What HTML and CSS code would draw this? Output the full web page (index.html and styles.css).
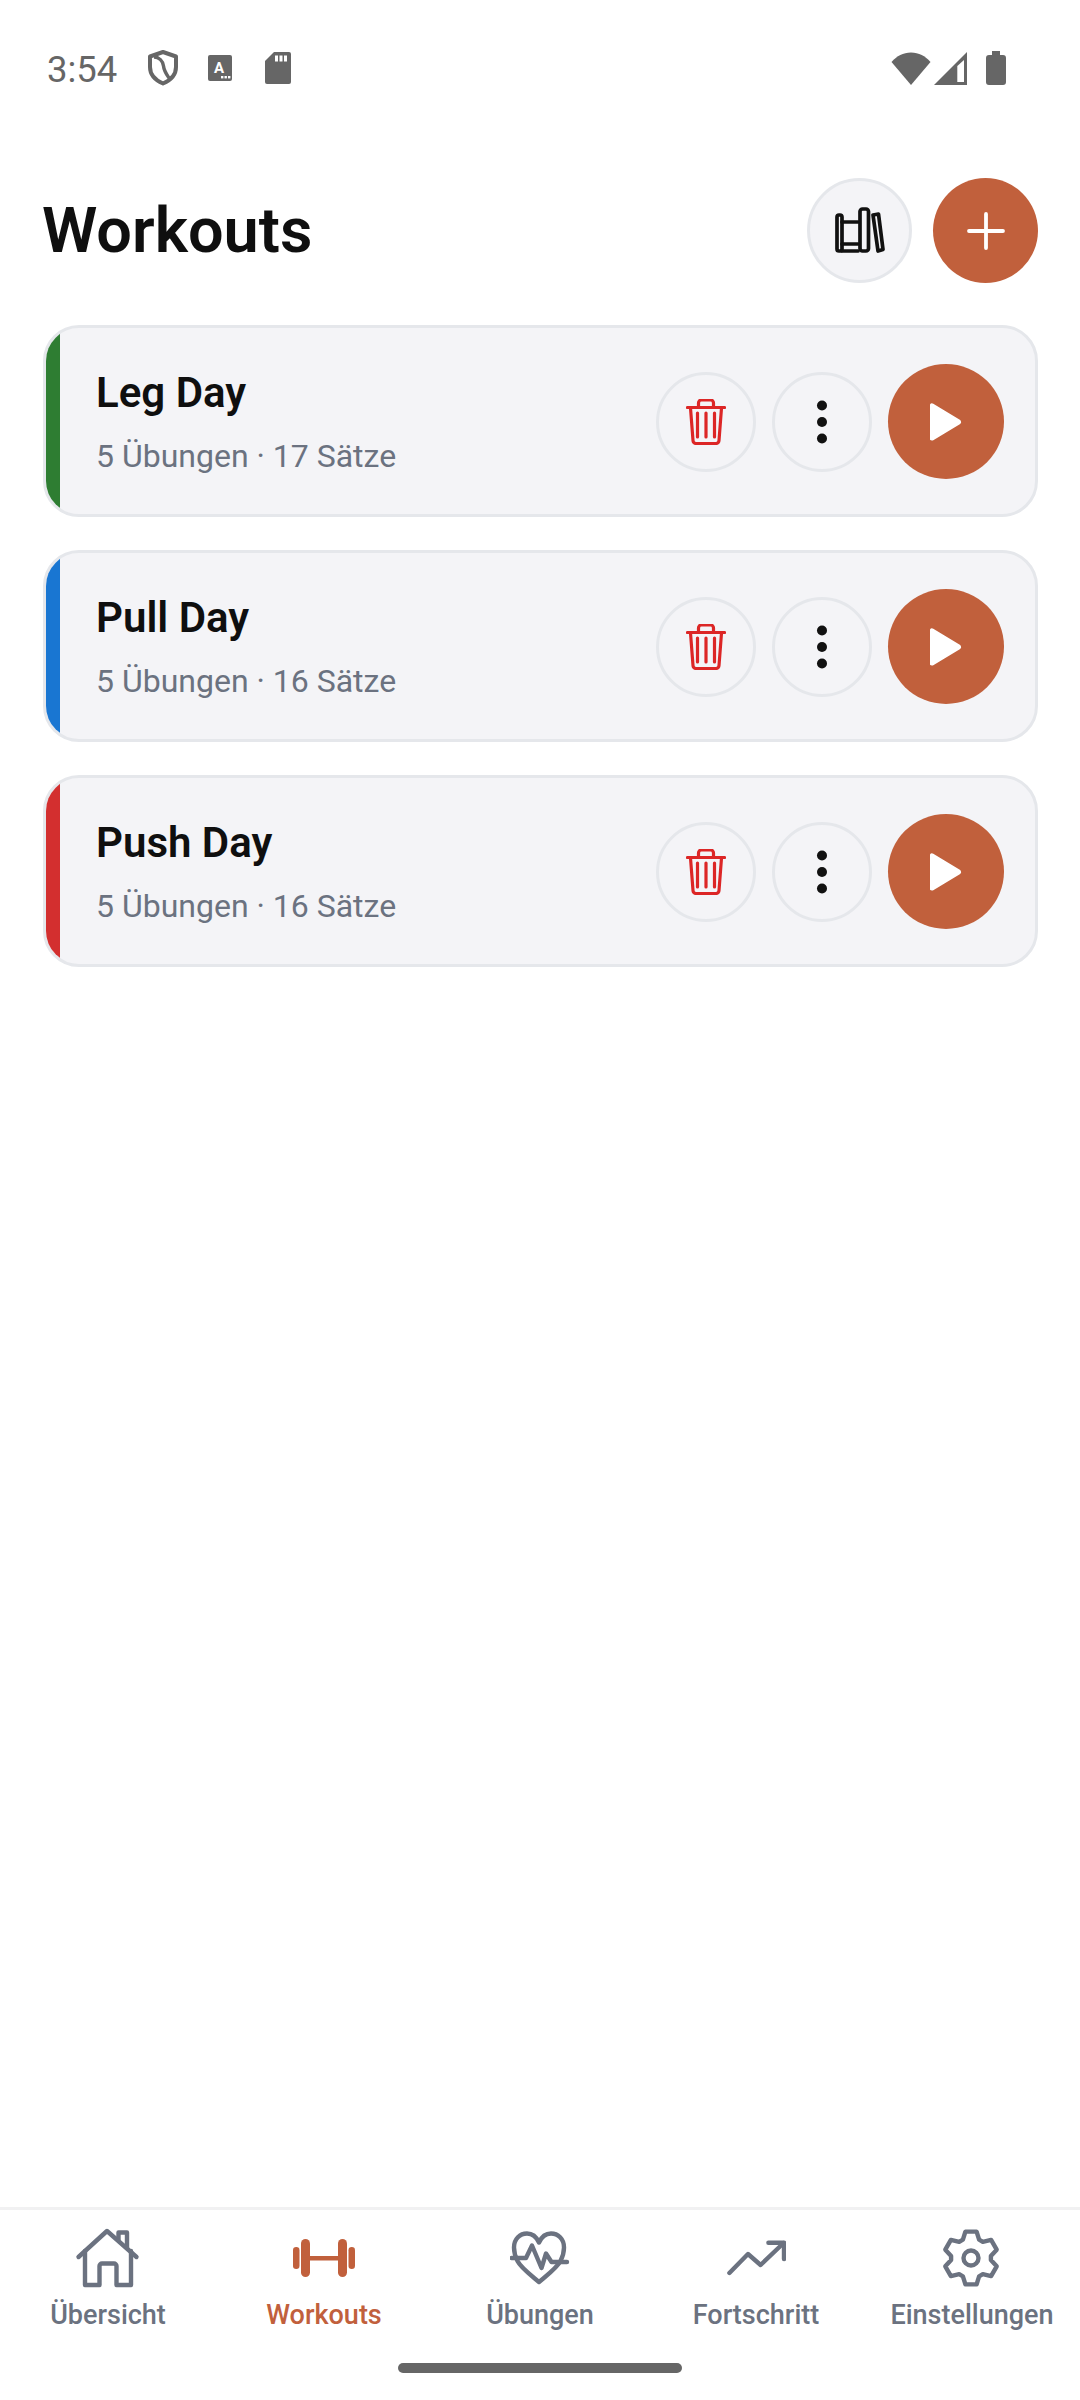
FILE: index.html
```html
<!DOCTYPE html>
<html lang="en">
<head>
    <meta charset="UTF-8">
    <meta name="viewport" content="width=device-width, initial-scale=1.0">
    <title>Workouts</title>
    <link rel="stylesheet" href="styles.css">
</head>
<body>
    <div class="status-bar">
        <span class="status-time">3:54</span>
        <svg class="status-shield" width="30" height="36" viewBox="0 0 30 36" fill="none" stroke="#666" stroke-width="4" stroke-linejoin="round">
            <path d="M15 2 L28 6.500 V17 C28 25 22 30.500 15 33.500 C8 30.500 2 25 2 17 V6.500 Z"/>
            <path d="M6 7 C11 7 15 11 15.500 16 C16 21 19 25 21 28" stroke-width="3.400"/>
        </svg>
        <svg class="status-a" width="24" height="26" viewBox="0 0 24 26">
            <rect width="24" height="26" rx="2" fill="#666"/>
            <text x="11" y="18" class="status-a-text">A</text>
            <rect x="13" y="21" width="2.400" height="2.400" fill="#fff"/>
            <rect x="16.500" y="21" width="2.400" height="2.400" fill="#fff"/>
            <rect x="20" y="21" width="2.400" height="2.400" fill="#fff"/>
        </svg>
        <svg class="status-sd" width="26" height="32" viewBox="0 0 26 32">
            <path d="M9 0 H24 a2 2 0 0 1 2 2 V30 a2 2 0 0 1 -2 2 H2 a2 2 0 0 1 -2 -2 V9 Z" fill="#666"/>
            <rect x="10" y="3.500" width="3" height="6" fill="#fff"/>
            <rect x="14.500" y="3.500" width="3" height="6" fill="#fff"/>
            <rect x="19" y="3.500" width="3" height="6" fill="#fff"/>
        </svg>
        <div class="status-right">
            <svg width="40" height="33" viewBox="0 0 40 33">
                <path d="M20 33 L0.500 10 C6 4 12 .5 20 .5 C28 .5 34 4 39.500 10 Z" fill="#666"/>
            </svg>
            <svg width="33" height="33" viewBox="0 0 33 33">
                <path d="M0 33 L33 0 V33 Z" fill="#666"/>
                <path d="M23.300 14 L30 8 V30 H23.300 Z" fill="#fff"/>
            </svg>
            <svg class="status-battery" width="20" height="34" viewBox="0 0 20 34">
                <path d="M6 0 H14 V4 H17 a3 3 0 0 1 3 3 V31 a3 3 0 0 1 -3 3 H3 a3 3 0 0 1 -3 -3 V7 a3 3 0 0 1 3 -3 H6 Z" fill="#666"/>
            </svg>
        </div>
    </div>

    <div class="page">
        <div class="header">
            <h1>Workouts</h1>
            <div class="header-actions">
                <button class="round-btn lib-btn">
                    <svg width="50" height="48" viewBox="0 0 50 48" fill="none" stroke="#111" stroke-width="3.700" stroke-linejoin="round" stroke-linecap="round">
                        <rect x="2" y="8" width="5" height="36" rx="2"/>
                        <path d="M7 15 H23 M7 37 H23 M7 44 H23"/>
                        <rect x="25" y="2" width="8.500" height="42" rx="2.500"/>
                        <path d="M38 8 L43.500 7 L48 42.500 L43 44 Z"/>
                    </svg>
                </button>
                <button class="round-btn add-btn">
                    <svg width="38" height="38" viewBox="0 0 38 38" fill="none" stroke="#fff" stroke-width="3.800" stroke-linecap="round">
                        <path d="M19 2 V36 M2 19 H36"/>
                    </svg>
                </button>
            </div>
        </div>

        <div class="card card-green">
            <div class="card-stripe"></div>
            <div class="card-text">
                <div class="card-name">Leg Day</div>
                <div class="card-meta">5 Übungen · 17 Sätze</div>
            </div>
            <button class="icon-btn">
                <svg width="40" height="46" viewBox="0 0 40 46" fill="none" stroke="#dc2626" stroke-width="3.200" stroke-linecap="round" stroke-linejoin="round">
                    <path d="M1.500 8.500 H38.500 M12.500 8 V4 a3 3 0 0 1 3 -3 H24.500 a3 3 0 0 1 3 3 V8"/>
                    <path d="M4.500 9 L7 41.500 a3 3 0 0 0 3 3 H30 a3 3 0 0 0 3 -3 L35.500 9"/>
                    <path d="M11.500 14 V38 M20 14 V38 M28.500 14 V38"/>
                </svg>
            </button>
            <button class="icon-btn">
                <svg width="12" height="44" viewBox="0 0 12 44" fill="#111">
                    <circle cx="6" cy="5.500" r="5"/><circle cx="6" cy="22" r="5"/><circle cx="6" cy="38.500" r="5"/>
                </svg>
            </button>
            <button class="play-btn">
                <svg width="32" height="38" viewBox="1 0 32 38" fill="#fff" stroke="#fff" stroke-width="5" stroke-linejoin="round">
                    <path d="M3 3 V35 L29.500 19 Z"/>
                </svg>
            </button>
        </div>

        <div class="card card-blue">
            <div class="card-stripe"></div>
            <div class="card-text">
                <div class="card-name">Pull Day</div>
                <div class="card-meta">5 Übungen · 16 Sätze</div>
            </div>
            <button class="icon-btn">
                <svg width="40" height="46" viewBox="0 0 40 46" fill="none" stroke="#dc2626" stroke-width="3.200" stroke-linecap="round" stroke-linejoin="round">
                    <path d="M1.500 8.500 H38.500 M12.500 8 V4 a3 3 0 0 1 3 -3 H24.500 a3 3 0 0 1 3 3 V8"/>
                    <path d="M4.500 9 L7 41.500 a3 3 0 0 0 3 3 H30 a3 3 0 0 0 3 -3 L35.500 9"/>
                    <path d="M11.500 14 V38 M20 14 V38 M28.500 14 V38"/>
                </svg>
            </button>
            <button class="icon-btn">
                <svg width="12" height="44" viewBox="0 0 12 44" fill="#111">
                    <circle cx="6" cy="5.500" r="5"/><circle cx="6" cy="22" r="5"/><circle cx="6" cy="38.500" r="5"/>
                </svg>
            </button>
            <button class="play-btn">
                <svg width="32" height="38" viewBox="1 0 32 38" fill="#fff" stroke="#fff" stroke-width="5" stroke-linejoin="round">
                    <path d="M3 3 V35 L29.500 19 Z"/>
                </svg>
            </button>
        </div>

        <div class="card card-red">
            <div class="card-stripe"></div>
            <div class="card-text">
                <div class="card-name">Push Day</div>
                <div class="card-meta">5 Übungen · 16 Sätze</div>
            </div>
            <button class="icon-btn">
                <svg width="40" height="46" viewBox="0 0 40 46" fill="none" stroke="#dc2626" stroke-width="3.200" stroke-linecap="round" stroke-linejoin="round">
                    <path d="M1.500 8.500 H38.500 M12.500 8 V4 a3 3 0 0 1 3 -3 H24.500 a3 3 0 0 1 3 3 V8"/>
                    <path d="M4.500 9 L7 41.500 a3 3 0 0 0 3 3 H30 a3 3 0 0 0 3 -3 L35.500 9"/>
                    <path d="M11.500 14 V38 M20 14 V38 M28.500 14 V38"/>
                </svg>
            </button>
            <button class="icon-btn">
                <svg width="12" height="44" viewBox="0 0 12 44" fill="#111">
                    <circle cx="6" cy="5.500" r="5"/><circle cx="6" cy="22" r="5"/><circle cx="6" cy="38.500" r="5"/>
                </svg>
            </button>
            <button class="play-btn">
                <svg width="32" height="38" viewBox="1 0 32 38" fill="#fff" stroke="#fff" stroke-width="5" stroke-linejoin="round">
                    <path d="M3 3 V35 L29.500 19 Z"/>
                </svg>
            </button>
        </div>
    </div>

    <div class="tab-bar">
        <div class="tabs">
            <div class="tab">
                <svg width="66" height="60" viewBox="0 0 66 60" fill="none" stroke="#6b7280" stroke-width="4.400" stroke-linecap="round" stroke-linejoin="round">
                    <path d="M3.500 29 L32 3 L61.500 29"/>
                    <path d="M10 23 V57 H24.500 V38 a2.500 2.500 0 0 1 2.500 -2.500 H39 a2.500 2.500 0 0 1 2.500 2.500 V57 H56 V23"/>
                    <path d="M43.500 12 V4.500 H52 V20"/>
                </svg>
                <span>Übersicht</span>
            </div>
            <div class="tab tab-active">
                <svg width="64" height="60" viewBox="0 0 64 60" fill="#c1603c">
                    <rect x="1" y="19" width="6.500" height="22" rx="3.200"/>
                    <rect x="9" y="11" width="9" height="38" rx="4.500"/>
                    <rect x="18" y="28" width="28" height="4.500"/>
                    <rect x="46" y="11" width="9" height="38" rx="4.500"/>
                    <rect x="56.500" y="19" width="6.500" height="22" rx="3.200"/>
                </svg>
                <span>Workouts</span>
            </div>
            <div class="tab">
                <svg width="60" height="60" viewBox="0 0 60 60" fill="none" stroke="#6b7280" stroke-width="4.400" stroke-linecap="round" stroke-linejoin="round">
                    <path d="M29 54 C22 48 11 40 7.500 33 C5 28 4 24 4 19.500 C4 11 10 5.500 17 5.500 C22 5.500 26.500 9 29 14.500 C31.500 9 36 5.500 41 5.500 C48 5.500 54 11 54 19.500 C54 24 53 28 50.500 33 C47 40 36 48 29 54 Z"/>
                    <path d="M1.500 30 H16 L22 17.500 L31.500 40 L36 25.500 L41.500 34 H57"/>
                </svg>
                <span>Übungen</span>
            </div>
            <div class="tab">
                <svg width="60" height="60" viewBox="0 0 60 60" fill="none" stroke="#6b7280" stroke-width="4.400" stroke-linecap="round" stroke-linejoin="round">
                    <path d="M3.400 45 L22 26 L34.600 37 L57.600 15"/>
                    <path d="M42.400 14.700 H58 V31"/>
                </svg>
                <span>Fortschritt</span>
            </div>
            <div class="tab">
                <svg width="60" height="60" viewBox="1 0 60 60" fill="none" stroke="#6b7280" stroke-width="4.400" stroke-linejoin="round">
                    <path d="M21.900 11.700 L24.400 3.600 H35.600 L38.100 11.700 L41.800 13.800 L50.100 11.900 L55.700 21.700 L49.900 27.900 V32.100 L55.700 38.300 L50.100 48.100 L41.800 46.200 L38.100 48.300 L35.600 56.400 H24.400 L21.900 48.300 L18.200 46.200 L9.900 48.100 L4.300 38.300 L10.100 32.100 V27.900 L4.300 21.700 L9.900 11.900 L18.200 13.800 Z"/>
                    <circle cx="30" cy="30" r="7.500"/>
                </svg>
                <span>Einstellungen</span>
            </div>
        </div>
        <div class="home-bar"></div>
    </div>
</body>
</html>
```
FILE: styles.css
```css
* {
    box-sizing: border-box;
}
body {
    font-family: 'Roboto', sans-serif;
    margin: 0;
    padding: 0;
    display: flex;
    flex-direction: column;
    height: 2400px;
    background: #fff;
    overflow: hidden;
}
button {
    padding: 0;
    margin: 0;
    display: flex;
    align-items: center;
    justify-content: center;
    flex-shrink: 0;
    border-radius: 50%;
}

.status-bar {
    height: 136px;
    padding-left: 47px;
    padding-right: 74px;
    display: flex;
    align-items: center;
}
.status-time {
    font-size: 36.500px;
    line-height: 44px;
    padding-top: 3px;
    color: #666;
    width: 101px;
}
.status-a {
    margin-left: 30px;
}
.status-sd {
    margin-left: 33px;
}
.status-a-text {
    font-family: 'Roboto', sans-serif;
    font-size: 15px;
    font-weight: 700;
    fill: #fff;
    text-anchor: middle;
}
.status-right {
    margin-left: auto;
    display: flex;
    align-items: center;
    gap: 3px;
}
.status-battery {
    margin-left: 16px;
}

.page {
    flex: 1;
    padding: 42px 42px 0 43px;
    display: flex;
    flex-direction: column;
    gap: 33px;
}
.header {
    height: 105px;
    margin-bottom: 9px;
    display: flex;
    align-items: center;
    justify-content: space-between;
}
h1 {
    margin: 0 0 0 -1px;
    font-size: 63px;
    font-weight: 600;
    color: #0f0f0f;
}
.header-actions {
    display: flex;
    gap: 21px;
}
.round-btn {
    width: 105px;
    height: 105px;
    border: none;
}
.lib-btn {
    background: #f4f4f7;
    border: 3px solid #e5e7eb;
}
.add-btn {
    background: #c1603c;
}

.card {
    height: 192px;
    background: #f4f4f7;
    border: 3px solid #e5e7eb;
    border-radius: 36px;
    padding-right: 31px;
    display: flex;
    align-items: center;
    gap: 16px;
    overflow: hidden;
}
.card-stripe {
    width: 14px;
    align-self: stretch;
    margin-right: 20px;
    flex-shrink: 0;
}
.card-green .card-stripe {
    background: #2e7d32;
}
.card-blue .card-stripe {
    background: #1976d2;
}
.card-red .card-stripe {
    background: #d32f2f;
}
.card-text {
    flex: 1;
    padding-top: 2px;
    display: flex;
    flex-direction: column;
    gap: 20px;
}
.card-name {
    font-size: 42px;
    font-weight: 600;
    line-height: 48px;
    color: #0f0f0f;
}
.card-meta {
    font-size: 32px;
    line-height: 38px;
    color: #6b7280;
}
.icon-btn {
    width: 100px;
    height: 100px;
    margin-top: 1px;
    background: transparent;
    border: 3px solid #e5e7eb;
}
.play-btn {
    width: 116px;
    height: 115px;
    margin-top: 1px;
    background: #c1603c;
    border: none;
}

.tab-bar {
    height: 193px;
    border-top: 3px solid #f1f1f2;
    display: flex;
    flex-direction: column;
    align-items: center;
}
.tabs {
    width: 100%;
    display: grid;
    grid-template-columns: repeat(5, 1fr);
    padding-top: 18px;
}
.tab {
    display: flex;
    flex-direction: column;
    align-items: center;
    gap: 12px;
    font-size: 27px;
    font-weight: 500;
    line-height: 30px;
    color: #6b7280;
    white-space: nowrap;
}
.tab-active {
    color: #c1603c;
}
.home-bar {
    width: 284px;
    height: 10px;
    margin-top: 33px;
    border-radius: 5px;
    background: #666;
}
```
